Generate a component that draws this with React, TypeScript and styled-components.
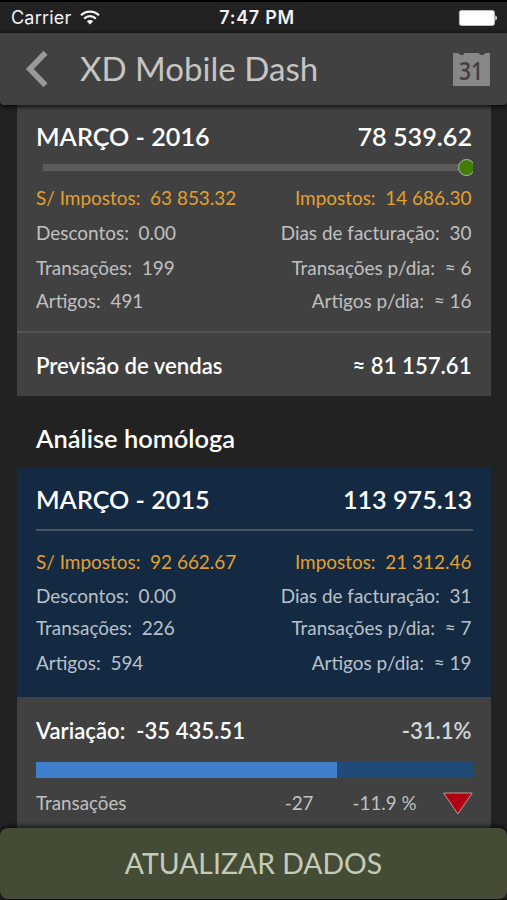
import React from "react";
import styled, { createGlobalStyle } from "styled-components";

const GlobalStyle = createGlobalStyle`
  *, *::before, *::after { box-sizing: border-box; }
  html, body { margin: 0; padding: 0; background: #222; }
`;

const Screen = styled.div`
  display: flex;
  flex-direction: column;
  width: 507px;
  height: 900px;
  overflow: hidden;
  background: #222;
  border-top: 2px solid #000;
  border-bottom: 1px solid #10110d;
  font-family: Lato, "Open Sans", sans-serif;
  color: #c0c0c0;
`;

const StatusBar = styled.div`
  display: grid;
  grid-template-columns: 1fr auto 1fr;
  align-items: center;
  flex: 0 0 31px;
  padding: 0 10px 0 11px;
  font-family: Inter, sans-serif;
  font-size: 18px;
  line-height: 31px;
  color: #f2f2f2;
`;

const Carrier = styled.div`
  display: flex;
  align-items: center;
  gap: 8.6px;
  letter-spacing: 0.2px;
`;

const Clock = styled.div`
  font-weight: 600;
  letter-spacing: 0.7px;
  margin-left: 6px;
`;

const Battery = styled.svg`
  justify-self: end;
`;

const Header = styled.header`
  display: flex;
  align-items: center;
  flex: 0 0 72px;
  padding: 0 17px 0 25px;
  background: #414141;
  border-radius: 0 0 4px 4px;
  box-shadow: 0 1px 4px 1px rgba(0, 0, 0, 0.75);
  z-index: 1;
`;

const Title = styled.h1`
  flex: 1;
  margin: 0 0 2px 31px;
  font-size: 33.1px;
  font-weight: 400;
  line-height: 40px;
  color: #c6c5c1;
`;

const Content = styled.main`
  flex: 1;
  min-height: 0;
  overflow: hidden;
  padding: 0 16px 0 17px;
`;

const Card = styled.section<{ $height: number; $blue?: boolean }>`
  height: ${(p) => p.$height}px;
  background: ${(p) => (p.$blue ? "#142942" : "#414141")};
  color: ${(p) => (p.$blue ? "#b9c1c9" : "#c0c0c0")};
`;

const PeriodRow = styled.div<{ $top: number }>`
  display: flex;
  justify-content: space-between;
  height: 53px;
  padding: ${(p) => p.$top}px 19px 0;
  font-size: 25.2px;
  font-weight: 600;
  line-height: 44px;
  color: #fff;
`;

const Slider = styled.div`
  display: flex;
  align-items: center;
  height: 19px;
  margin: 0 18px 0 26px;
  overflow: hidden;
`;

const Track = styled.div`
  flex: 1;
  height: 7px;
  background: #5c5c5c;
`;

const Knob = styled.div`
  flex: 0 0 17px;
  height: 17px;
  margin: 0 -2px 0 -1px;
  border: 1px solid #a9bd9c;
  border-radius: 50%;
  background: #417c0a;
`;

const Rule = styled.div`
  height: 2px;
  margin: 9px 18px 0 19px;
  background: #4c545f;
`;

const Stats = styled.div<{ $rows: string; $top: number }>`
  display: grid;
  grid-template-rows: ${(p) => p.$rows};
  padding: ${(p) => p.$top}px 19.5px 0 19px;
  font-size: 18.95px;
  line-height: 28px;
`;

const StatRow = styled.div<{ $accent?: boolean }>`
  display: flex;
  justify-content: space-between;
  white-space: pre;
  color: ${(p) => (p.$accent ? "#e3a02f" : "inherit")};
`;

const Forecast = styled.div`
  display: flex;
  justify-content: space-between;
  padding: 0 19.5px 0 19px;
  border-top: 2px solid #555;
  font-size: 22.15px;
  font-weight: 600;
  line-height: 65px;
  color: #fff;
`;

const SectionTitle = styled.h2`
  margin: 0;
  padding: 0 19px;
  height: 71px;
  font-size: 25.45px;
  font-weight: 600;
  line-height: 85px;
  color: #fff;
`;

const Variation = styled.div`
  display: flex;
  justify-content: space-between;
  padding: 14px 19.5px 0 19px;
  font-size: 22.1px;
  font-weight: 600;
  line-height: 40px;
  white-space: pre;
  color: #fff;
`;

const Percent = styled.span`
  color: #d5d5d5;
`;

const Bar = styled.div`
  height: 16px;
  margin: 11px 18px 0 19px;
  background: #204a78;
`;

const BarFill = styled.div`
  width: 68.9%;
  height: 100%;
  background: #3f7fcb;
`;

const DeltaRow = styled.div`
  display: grid;
  grid-template-columns: 1fr 90px 103px 56.5px;
  align-items: center;
  padding: 11px 18px 0 19px;
  font-size: 18.8px;
  line-height: 28px;
  text-align: right;
`;

const DeltaLabel = styled.span`
  text-align: left;
`;

const DownArrow = styled.svg`
  justify-self: end;
`;

const UpdateButton = styled.button`
  flex: 0 0 71px;
  padding: 0 0 1px;
  border: 0;
  border-radius: 8px;
  background: #454c35;
  box-shadow: 0 -1px 4px 1px rgba(0, 0, 0, 0.65);
  font: 400 28.4px/70px Lato, sans-serif;
  color: #c5cbb9;
  z-index: 1;
`;

type Stat = [left: string, right: string];

const current: Stat[] = [
  ["S/ Impostos:  63 853.32", "Impostos:  14 686.30"],
  ["Descontos:  0.00", "Dias de facturação:  30"],
  ["Transações:  199", "Transações p/dia:  ≈ 6"],
  ["Artigos:  491", "Artigos p/dia:  ≈ 16"],
];

const previous: Stat[] = [
  ["S/ Impostos:  92 662.67", "Impostos:  21 312.46"],
  ["Descontos:  0.00", "Dias de facturação:  31"],
  ["Transações:  226", "Transações p/dia:  ≈ 7"],
  ["Artigos:  594", "Artigos p/dia:  ≈ 19"],
];

function StatList({ stats, rows, top }: { stats: Stat[]; rows: string; top: number }) {
  return (
    <Stats $rows={rows} $top={top}>
      {stats.map(([left, right], i) => (
        <StatRow key={left} $accent={i === 0}>
          <span>{left}</span>
          <span>{right}</span>
        </StatRow>
      ))}
    </Stats>
  );
}

export default function App() {
  return (
    <>
      <GlobalStyle />
      <Screen>
        <StatusBar>
          <Carrier>
            Carrier
            <svg width="20" height="15" viewBox="0 0 20 15" fill="none" stroke="#f2f2f2">
              <path d="M1 5.2C6 .3 14 .3 19 5.2" strokeWidth="2.3" />
              <path d="M4.2 8.6C7.6 5.4 12.4 5.4 15.8 8.6" strokeWidth="2.2" />
              <path d="M6.8 11.2C8.6 9.5 11.4 9.5 13.2 11.2L10 14.5Z" fill="#f2f2f2" stroke="none" />
            </svg>
          </Carrier>
          <Clock>7:47 PM</Clock>
          <Battery width="39" height="16" viewBox="0 0 39 16">
            <rect x="1.4" y=".5" width="35" height="15" rx="2" fill="#fff" stroke="#bbb" />
            <path d="M37.3 5.4C39.5 6 39.5 10 37.3 10.6Z" fill="#eee" />
          </Battery>
        </StatusBar>
        <Header>
          <svg width="24" height="38" viewBox="0 0 24 38" fill="none" stroke="#999" strokeWidth="5.6">
            <path d="M20.5 2.8L4.8 19L20.5 35.2" />
          </svg>
          <Title>XD Mobile Dash</Title>
          <svg width="37" height="34" viewBox="0 0 37 34">
            <path
              d="M0 1H5.6C6 3.8 11 3.8 11.6 1H26C26.4 3.8 31.6 3.8 32 1H37V34H0Z"
              fill="#878787"
            />
            <text
              x="18"
              y="27.6"
              textAnchor="middle"
              fontFamily="Open Sans, sans-serif"
              fontWeight="600"
              fontSize="25"
              textLength="24"
              lengthAdjust="spacingAndGlyphs"
              fill="#414141"
            >
              31
            </text>
          </svg>
        </Header>
        <Content>
          <Card $height={291}>
            <PeriodRow $top={9}>
              <span>MARÇO - 2016</span>
              <span>78 539.62</span>
            </PeriodRow>
            <Slider>
              <Track />
              <Knob />
            </Slider>
            <StatList stats={current} rows="35px 35px 33px 44px" top={7.3} />
            <Forecast>
              <span>Previsão de vendas</span>
              <span>≈ 81 157.61</span>
            </Forecast>
          </Card>
          <SectionTitle>Análise homóloga</SectionTitle>
          <Card $height={230} $blue>
            <PeriodRow $top={10}>
              <span>MARÇO - 2015</span>
              <span>113 975.13</span>
            </PeriodRow>
            <Rule />
            <StatList stats={previous} rows="34.6px 32px 34.6px 28px" top={16.8} />
          </Card>
          <Card $height={160}>
            <Variation>
              <span>Variação:  -35 435.51</span>
              <Percent>-31.1%</Percent>
            </Variation>
            <Bar>
              <BarFill />
            </Bar>
            <DeltaRow>
              <DeltaLabel>Transações</DeltaLabel>
              <span>-27</span>
              <span>-11.9 %</span>
              <DownArrow width="30" height="23" viewBox="0 0 30 23">
                <path d="M.6 1H29.2L14.9 22Z" fill="#b00012" stroke="#b59a9c" />
              </DownArrow>
            </DeltaRow>
          </Card>
        </Content>
        <UpdateButton>ATUALIZAR DADOS</UpdateButton>
      </Screen>
    </>
  );
}
